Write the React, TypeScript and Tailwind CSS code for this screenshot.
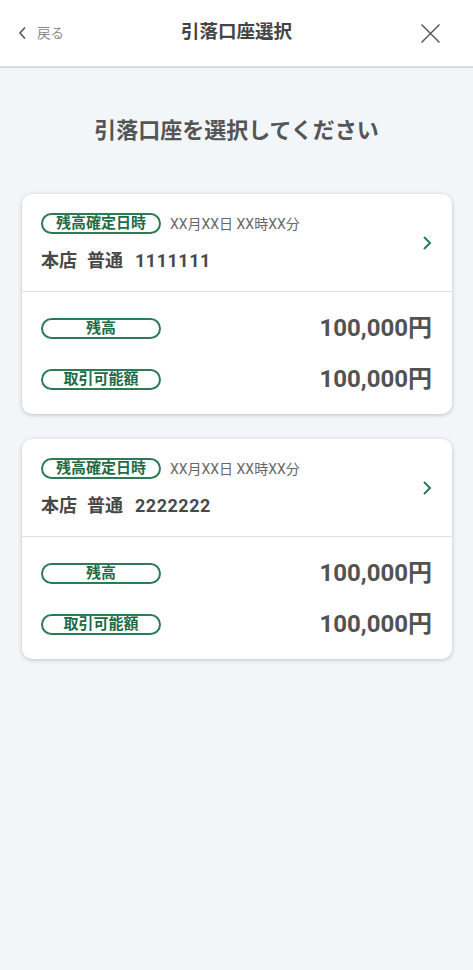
import React from "react";

const FONT = "Roboto, 'Noto Sans CJK JP', 'Noto Sans', sans-serif";

function Pill({ children }: { children: React.ReactNode }) {
  return (
    <div className="flex h-[21px] w-[120px] shrink-0 items-center justify-center rounded-full border-2 border-[#2c7a56] text-[15px] font-bold leading-none text-[#1f6b45]">
      {children}
    </div>
  );
}

function Card({ num }: { num: string }) {
  return (
    <div className="overflow-hidden rounded-[10px] bg-white shadow-[0_1px_4px_rgba(0,0,0,0.22)]">
      <div className="flex items-center pl-[19px] pr-[20px] pt-[19px] pb-[18px]">
        <div className="flex flex-1 flex-col">
          <div className="flex items-center gap-[9px]">
            <Pill>残高確定日時</Pill>
            <span className="text-[14px] leading-none text-[#666]">XX月XX日 XX時XX分</span>
          </div>
          <div className="mt-[15px] flex h-[24px] items-center gap-[10px] text-[18px] font-bold leading-[24px] text-[#484848]">
            <span>本店</span>
            <span>普通</span>
            <span className="ml-[2px] tracking-[0.5px]">{num}</span>
          </div>
        </div>
        <svg width="10" height="16" viewBox="0 0 10 16" className="shrink-0">
          <path d="M2 2 L8 8 L2 14" fill="none" stroke="#2c7a56" strokeWidth="2" />
        </svg>
      </div>
      <div className="h-[1px] bg-[#e0e0e0]" />
      <div className="flex flex-col gap-[19px] pl-[19px] pr-[20px] pt-[20px] pb-[19px]">
        <div className="flex h-[32px] items-center justify-between">
          <Pill>残高</Pill>
          <span className="text-[24px] font-bold leading-none text-[#525252]">100,000円</span>
        </div>
        <div className="flex h-[32px] items-center justify-between">
          <Pill>取引可能額</Pill>
          <span className="text-[24px] font-bold leading-none text-[#525252]">100,000円</span>
        </div>
      </div>
    </div>
  );
}

export default function App() {
  return (
    <div className="min-h-[970px] w-full bg-[#f2f6f9]" style={{ fontFamily: FONT }}>
      <div className="relative flex h-[68px] items-center justify-center border-b-2 border-[#dcdcdc] bg-white">
        <div className="absolute left-[18px] top-0 flex h-[66px] items-center gap-[9px]">
          <svg width="10" height="14" viewBox="0 0 10 14">
            <path d="M7 1.5 L2 7 L7 12.5" fill="none" stroke="#555" strokeWidth="1.6" />
          </svg>
          <span className="text-[13.5px] text-[#8a8a8a]">戻る</span>
        </div>
        <span className="text-[18.5px] font-bold text-[#444]">引落口座選択</span>
        <div className="absolute right-[32px] top-0 flex h-[66px] items-center">
          <svg width="21" height="21" viewBox="0 0 21 21">
            <path d="M1.5 1.5 L19.5 19.5 M19.5 1.5 L1.5 19.5" stroke="#5a5a5a" strokeWidth="1.5" />
          </svg>
        </div>
      </div>
      <h1 className="mt-[48px] text-center text-[22px] font-bold leading-[30px] text-[#555]">
        引落口座を選択してください
      </h1>
      <div className="mt-[48px] flex flex-col gap-[25px] pl-[22px] pr-[21px]">
        <Card num="1111111" />
        <Card num="2222222" />
      </div>
    </div>
  );
}
